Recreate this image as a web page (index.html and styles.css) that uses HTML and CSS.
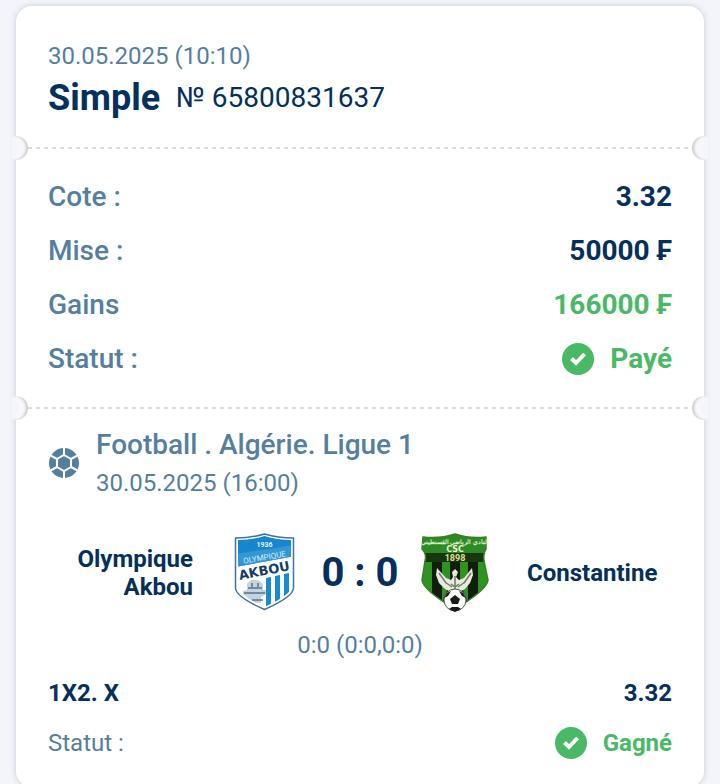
FILE: index.html
```html
<!DOCTYPE html>
<html lang="fr">
<head>
<meta charset="utf-8">
<meta name="viewport" content="width=device-width, initial-scale=1">
<title>Simple № 65800831637</title>
<link rel="stylesheet" href="styles.css">
</head>
<body>
<main class="page">
  <article class="ticket">
    <header class="head">
      <time class="date">30.05.2025 (10:10)</time>
      <div class="title">
        <h1 class="kind">Simple</h1>
        <span class="number">№ 65800831637</span>
      </div>
    </header>

    <div class="tear"></div>

    <dl class="summary">
      <div class="row"><dt>Cote :</dt><dd>3.32</dd></div>
      <div class="row"><dt>Mise :</dt><dd>50000 ₣</dd></div>
      <div class="row"><dt>Gains</dt><dd class="good">166000 ₣</dd></div>
      <div class="row"><dt>Statut :</dt><dd class="good status">
        <svg class="check" viewBox="0 0 32 32" aria-hidden="true"><circle cx="16" cy="16" r="16"/><path d="M9.500 15.500 14 20 22.500 11"/></svg>
        Payé</dd></div>
    </dl>

    <div class="tear"></div>

    <section class="event">
      <div class="league">
        <svg class="ball" viewBox="0 0 30 30" aria-hidden="true">
          <circle class="ball-fill" cx="15" cy="15" r="15"/>
          <path class="ball-line" d="M15 0V7M15 23V30M15 7 22 11V19L15 23 8 19V11ZM22 11 28.500 7.500M22 19 28.500 22.500M8 11 1.500 7.500M8 19 1.500 22.500"/>
        </svg>
        <div class="league-text">
          <h2 class="league-name">Football . Algérie. Ligue 1</h2>
          <time class="date">30.05.2025 (16:00)</time>
        </div>
      </div>

      <div class="match">
        <div class="team home">Olympique Akbou</div>
        <svg class="crest" viewBox="0 0 80 80" role="img" aria-label="Olympique Akbou">
          <defs><clipPath id="akbou"><path d="M13 7Q27 7 39.500 3 52 7 66 7V55Q65 62 39.500 74 14 62 13 55Z"/></clipPath></defs>
          <path d="M10.500 5Q26 5 39.500 1 53 5 68.500 5V55Q68 64 39.500 76.500 11 64 10.500 55Z" fill="#fff" stroke="#42729d" stroke-width="1.500"/>
          <g clip-path="url(#akbou)">
            <path d="M10 0H70V23L10 34Z" fill="#1687cc"/>
            <path d="M10 21 70 12V23L10 34Z" fill="#3397d6"/>
            <path d="M41 45 46 44V76H41ZM50 43 55 42V76H50ZM59 41 64 40V76H59Z" fill="#168bd0"/>
            <path d="M22 57V51L26 47H33L38 51V57H41V61L36 64V70H26L22 64 18 61V58Z" fill="#c3d3df"/>
            <path d="M23 55H37M19 60H40M27 50V54M33 50V54M27 67H38" stroke="#55738e" stroke-width="1.500" fill="none"/>
          </g>
          <text x="39.500" y="14" font-size="7" font-weight="700" fill="#e4f3fc" text-anchor="middle">1936</text>
          <text x="40" y="27" font-size="8" fill="#d5eefc" text-anchor="middle" transform="rotate(-10 40 27)">OLYMPIQUE</text>
          <text class="crest-wide" x="40" y="42" font-size="13" fill="#173c69" text-anchor="middle" transform="rotate(-11 40 42)">AKBOU</text>
        </svg>
        <div class="score">0 : 0</div>
        <svg class="crest" viewBox="0 0 80 80" role="img" aria-label="Constantine">
          <defs><clipPath id="csc"><path d="M8 4Q25 6 40 1 55 6 71 4V16Q68 21 69 28L73 47Q72 57 40 76 8 57 7 47L10 28Q12 21 7 16Z"/></clipPath></defs>
          <g clip-path="url(#csc)">
            <path d="M0 0H80V80H0Z" fill="#111d0d"/>
            <path d="M0 28H17V65L8 60ZM27 25 35 23V50L27 70ZM45 23 53 25V70L45 50ZM63 26H75V62L63 65Z" fill="#2f9321"/>
            <path d="M0 0H80V20H0Z" fill="#2b8c25"/>
            <path d="M0 20H80V29H0Z" fill="#17380f"/>
          </g>
          <path d="M8 4Q25 6 40 1 55 6 71 4V16Q68 21 69 28L73 47Q72 57 40 76 8 57 7 47L10 28Q12 21 7 16Z" fill="none" stroke="#397f29" stroke-width="1.500"/>
          <text x="40" y="11" font-size="6" font-weight="700" fill="#e4efcf" text-anchor="middle">النادي الرياضي القسنطيني</text>
          <text class="crest-wide" x="40" y="19" font-size="8" fill="#f2f4d6" text-anchor="middle">CSC</text>
          <text x="40" y="28" font-size="9" font-weight="700" fill="#e6db91" text-anchor="middle">1898</text>
          <path d="M40 36 43 39 41 44 44 47 49 45 57 35 58 42 55 50 50 56 44 59H36L30 56 24 50 21 42 22 35 31 45 36 47 38 44 37 39Z" fill="#e8eade"/>
          <path d="M24 40 31 50M56 40 49 50M30 49 37 54M50 49 43 54M40 43V57M36 51 40 54 44 51" stroke="#737b69" stroke-width="1.500" fill="none"/>
          <circle cx="40" cy="67" r="11" fill="#fafafa" stroke="#555" stroke-width="1"/>
          <path d="M35 66 40 62 45 66 43 71H37ZM29 65 32 60 36 58 33 63ZM51 65 48 60 44 58 47 63ZM34 76 37 74H43L46 76 40 79Z" fill="#171d17"/>
        </svg>
        <div class="team away">Constantine</div>
      </div>

      <p class="periods">0:0 (0:0,0:0)</p>

      <dl class="outcome">
        <div class="row pick"><dt>1X2. X</dt><dd>3.32</dd></div>
        <div class="row"><dt>Statut :</dt><dd class="good status">
          <svg class="check" viewBox="0 0 32 32" aria-hidden="true"><circle cx="16" cy="16" r="16"/><path d="M9.500 15.500 14 20 22.500 11"/></svg>
          Gagné</dd></div>
      </dl>
    </section>
  </article>
</main>
</body>
</html>
```
FILE: styles.css
```css
:root {
  --bg: #f3f5fb;
  --muted: #557f9f;
  --dark: #03305c;
  --green: #49b966;
}

* { box-sizing: border-box; }

body {
  margin: 0;
  background: var(--bg);
  color: var(--dark);
  font-family: Roboto, "Liberation Sans", sans-serif;
  font-size: 24px;
  line-height: 28px;
}

h1, h2, p, dl, dd { margin: 0; }

.page {
  height: 100vh;
  overflow: hidden;
  padding: 6px 16px 0;
}

.ticket {
  background: #fff;
  border-radius: 16px;
  box-shadow: 0 0 6px rgba(40, 50, 80, 0.22);
}

.head { padding: 36px 32px 27px; }

.date {
  display: block;
  color: var(--muted);
}

.title {
  display: flex;
  align-items: center;
  gap: 16px;
  margin-top: 6px;
  line-height: 44px;
}

.kind {
  font-size: 36px;
  font-weight: 700;
}

.number { font-size: 28px; }

/* Perforated line with a notch at each edge of the ticket */
.tear {
  position: relative;
  height: 2px;
  margin: 0 12px;
  background: repeating-linear-gradient(90deg, #dedede 0 4px, transparent 4px 8px);
}

.tear::before,
.tear::after {
  content: "";
  position: absolute;
  top: -11px;
  width: 16px;
  height: 24px;
}

.tear::before {
  left: -16px;
  border-radius: 0 12px 12px 0;
  background: linear-gradient(90deg, var(--bg), #fafafb);
  box-shadow: inset -3px 0 3px -1px rgba(0, 0, 0, 0.2);
}

.tear::after {
  right: -16px;
  border-radius: 12px 0 0 12px;
  background: linear-gradient(270deg, var(--bg), #fafafb);
  box-shadow: inset 3px 0 3px -1px rgba(0, 0, 0, 0.2);
}

.summary {
  display: grid;
  gap: 22px;
  padding: 32px;
  font-size: 28px;
  line-height: 32px;
}

.row {
  display: flex;
  align-items: center;
  justify-content: space-between;
}

.row dt { color: var(--muted); }
.row dd { font-weight: 700; }
.summary dt { font-weight: 500; }
.row .good { color: var(--green); }

.status {
  display: flex;
  align-items: center;
  gap: 16px;
}

.check {
  width: 32px;
  height: 32px;
  fill: var(--green);
}

.check path {
  fill: none;
  stroke: #fff;
  stroke-width: 4;
}

.event { padding: 20px 32px 28px; }

.league {
  display: flex;
  align-items: center;
  gap: 16px;
}

.ball {
  width: 32px;
  height: 32px;
  padding: 1px;
}

.ball-fill { fill: var(--muted); }

.ball-line {
  fill: none;
  stroke: #fff;
  stroke-width: 2;
}

.league-name {
  margin-bottom: 8px;
  color: var(--muted);
  font-size: 28px;
  font-weight: 500;
  line-height: 32px;
}

.match {
  display: grid;
  grid-template-columns: 1fr 80px 110px 80px 1fr;
  align-items: center;
  margin-top: 36px;
}

.team { font-weight: 700; }

.home {
  padding: 0 32px 0 16px;
  text-align: right;
}

.away { padding-left: 32px; }

.crest {
  width: 80px;
  height: 80px;
}

.crest-wide {
  font-family: "DejaVu Sans", sans-serif;
  font-weight: 700;
}

.score {
  font-size: 40px;
  font-weight: 700;
  line-height: 48px;
  text-align: center;
}

.periods {
  margin-top: 18px;
  color: var(--muted);
  text-align: center;
}

.outcome {
  display: grid;
  gap: 20px;
  margin-top: 20px;
}

.pick dt {
  color: var(--dark);
  font-weight: 700;
}
```
